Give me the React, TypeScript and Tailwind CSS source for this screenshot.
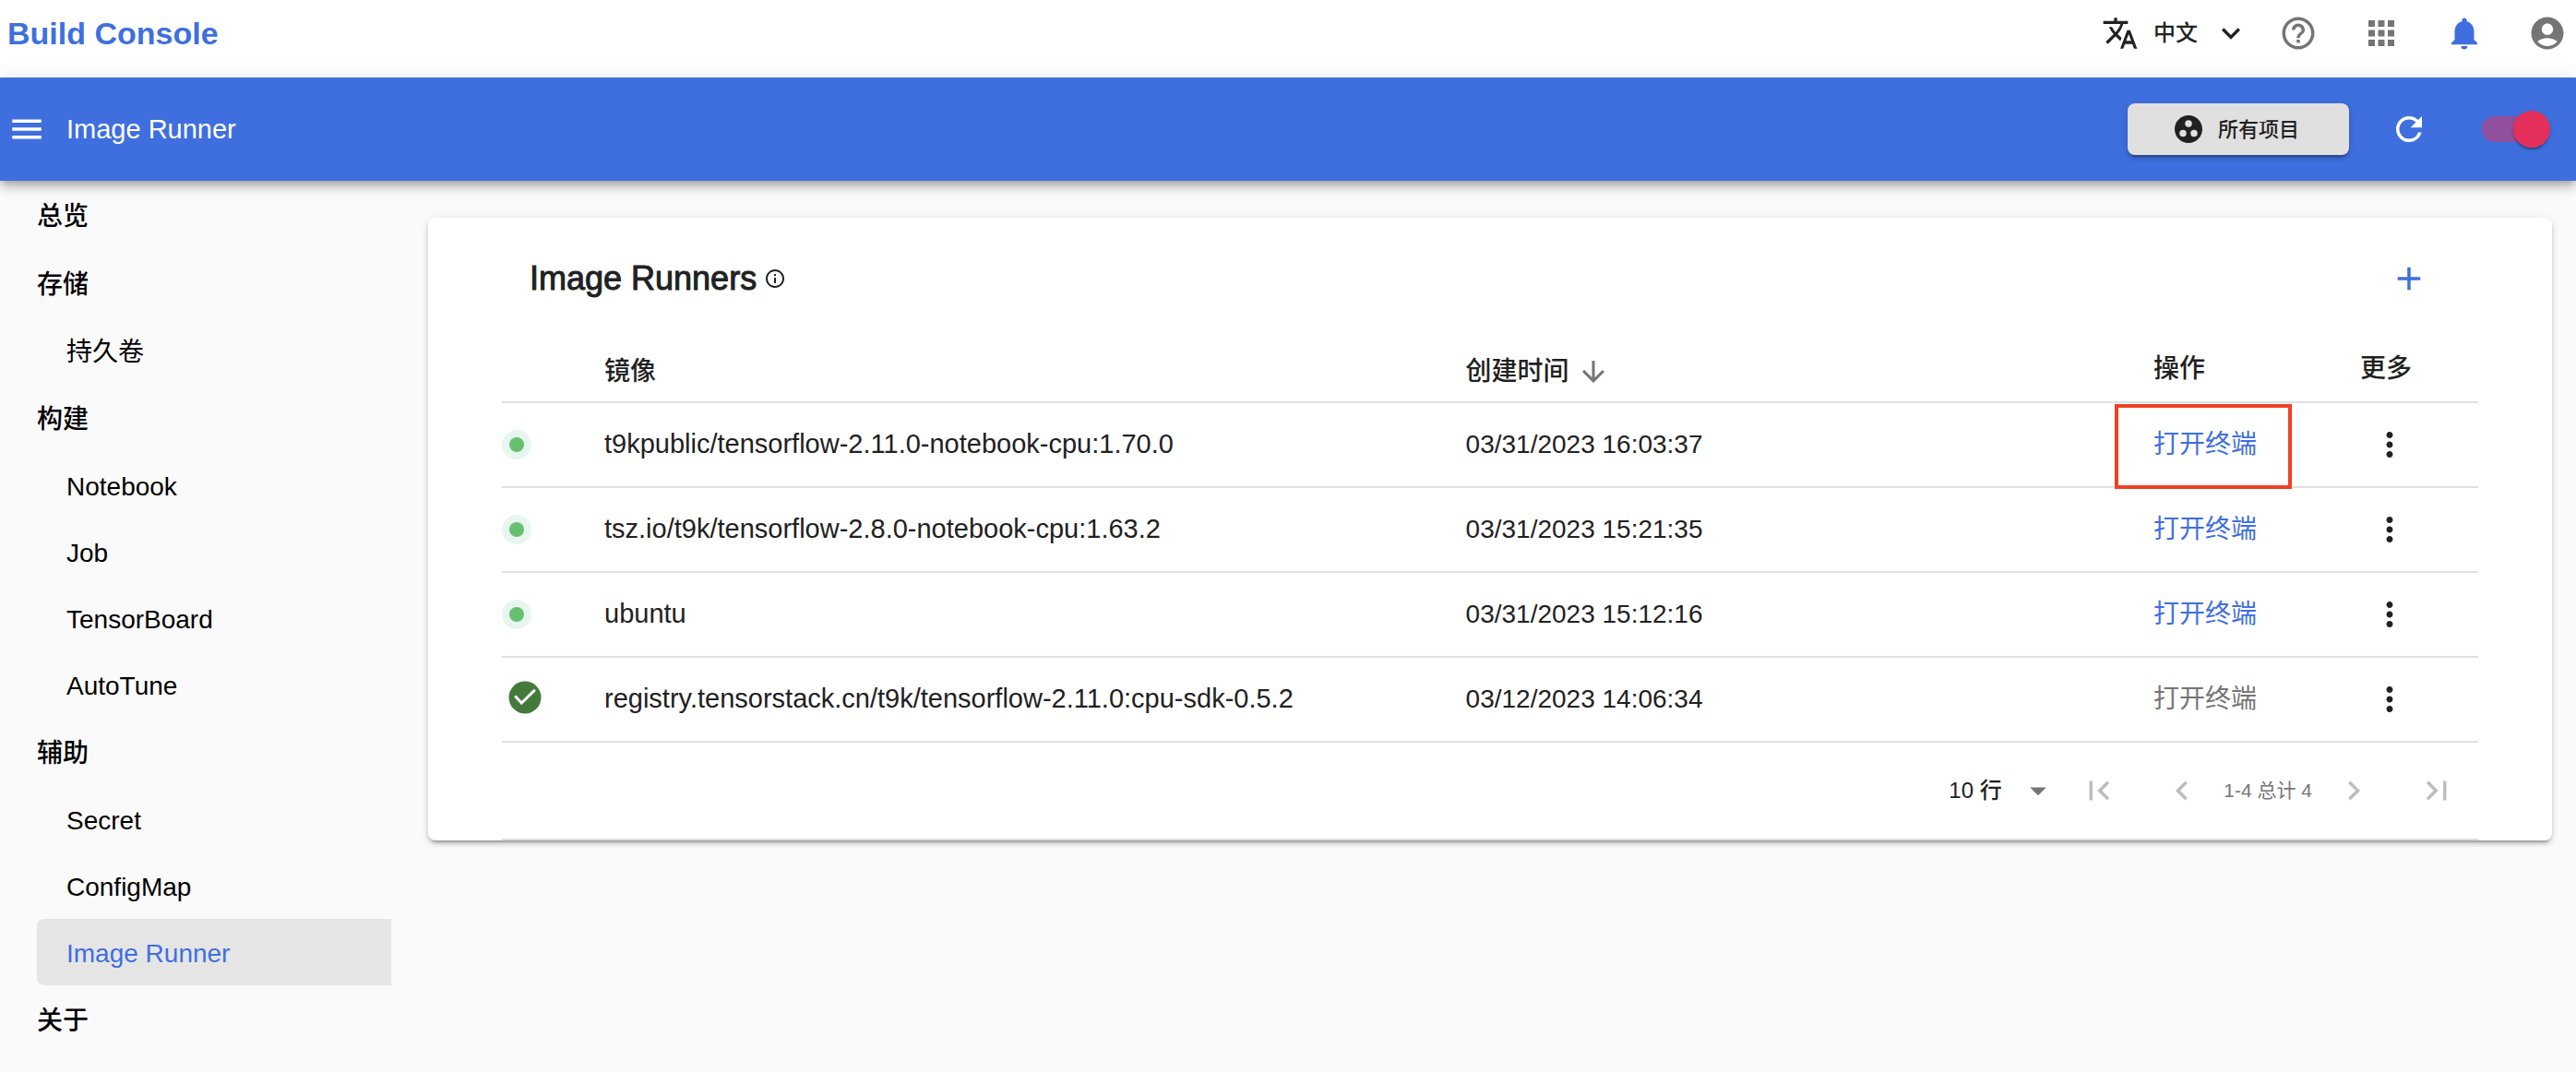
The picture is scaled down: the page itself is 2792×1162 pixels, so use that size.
import React from "react";
import {
  MdAccountCircle,
  MdAdd,
  MdApps,
  MdArrowDownward,
  MdArrowDropDown,
  MdChevronLeft,
  MdChevronRight,
  MdExpandMore,
  MdFirstPage,
  MdGroupWork,
  MdHelpOutline,
  MdInfoOutline,
  MdLastPage,
  MdMenu,
  MdMoreVert,
  MdNotifications,
  MdRefresh,
  MdTranslate,
} from "react-icons/md";

type NavItem = { label: string; group?: boolean; active?: boolean };

const navItems: NavItem[] = [
  { label: "总览", group: true },
  { label: "存储", group: true },
  { label: "持久卷" },
  { label: "构建", group: true },
  { label: "Notebook" },
  { label: "Job" },
  { label: "TensorBoard" },
  { label: "AutoTune" },
  { label: "辅助", group: true },
  { label: "Secret" },
  { label: "ConfigMap" },
  { label: "Image Runner", active: true },
  { label: "关于", group: true },
];

type Runner = {
  image: string;
  created: string;
  status: "running" | "succeeded";
  highlighted?: boolean;
};

const runners: Runner[] = [
  {
    image: "t9kpublic/tensorflow-2.11.0-notebook-cpu:1.70.0",
    created: "03/31/2023 16:03:37",
    status: "running",
    highlighted: true,
  },
  {
    image: "tsz.io/t9k/tensorflow-2.8.0-notebook-cpu:1.63.2",
    created: "03/31/2023 15:21:35",
    status: "running",
  },
  { image: "ubuntu", created: "03/31/2023 15:12:16", status: "running" },
  {
    image: "registry.tensorstack.cn/t9k/tensorflow-2.11.0:cpu-sdk-0.5.2",
    created: "03/12/2023 14:06:34",
    status: "succeeded",
  },
];

function TopBar() {
  return (
    <header className="flex h-[84px] items-center bg-white pr-[10px] pb-3 pl-2">
      <a href="#" className="text-[34px] leading-10 font-bold text-[#3f6fde]">
        Build Console
      </a>
      <div className="ml-auto flex items-center gap-8">
        <button
          type="button"
          aria-haspopup="menu"
          className="flex items-center gap-4 text-2xl font-medium text-[#212121]"
        >
          <MdTranslate size={40} />
          中文
          <MdExpandMore size={40} />
        </button>
        <div className="flex items-center gap-12 text-[#757575]">
          <button type="button" aria-label="帮助">
            <MdHelpOutline size={42} />
          </button>
          <button type="button" aria-label="应用">
            <MdApps size={42} />
          </button>
          <button type="button" aria-label="通知" className="text-[#3f6fde]">
            <MdNotifications size={42} />
          </button>
          <button type="button" aria-label="账户">
            <MdAccountCircle size={42} />
          </button>
        </div>
      </div>
    </header>
  );
}

function AppBar() {
  return (
    <div className="relative z-10 flex h-28 items-center bg-[#3f6fde] pr-[34px] pl-2 text-white shadow-[0_4px_8px_-2px_rgba(0,0,0,0.2),0_8px_10px_0_rgba(0,0,0,0.14),0_2px_20px_0_rgba(0,0,0,0.12)]">
      <button type="button" aria-label="菜单">
        <MdMenu size={42} />
      </button>
      <h1 className="ml-[22px] text-[29px] leading-10 font-medium">Image Runner</h1>
      <button
        type="button"
        className="ml-auto flex h-14 w-[240px] items-center gap-[14px] rounded-lg bg-[#e0e0e0] pl-12 text-[22px] font-medium text-[#212121] shadow-[0_6px_2px_-4px_rgba(0,0,0,0.2),0_4px_4px_0_rgba(0,0,0,0.14),0_2px_10px_0_rgba(0,0,0,0.12)]"
      >
        <MdGroupWork size={36} />
        所有项目
      </button>
      <button type="button" aria-label="刷新" className="ml-11">
        <MdRefresh size={42} />
      </button>
      <input
        type="checkbox"
        role="switch"
        defaultChecked
        aria-label="自动刷新"
        className="relative ml-[58px] h-7 w-[68px] appearance-none rounded-full bg-[#91509d] after:absolute after:-top-1.5 after:left-[34px] after:size-10 after:rounded-full after:bg-[#e4305b] after:shadow-[0_4px_2px_-2px_rgba(0,0,0,0.2),0_2px_2px_0_rgba(0,0,0,0.14),0_2px_6px_0_rgba(0,0,0,0.12)] after:content-['']"
      />
    </div>
  );
}

function Sidebar() {
  return (
    <nav className="flex w-[464px] shrink-0 flex-col px-10 text-[28px] text-black">
      {navItems.map((item) =>
        item.group ? (
          <a key={item.label} href="#" className="flex h-[74px] items-center pt-1 font-medium">
            {item.label}
          </a>
        ) : (
          <a
            key={item.label}
            href="#"
            aria-current={item.active ? "page" : undefined}
            className={
              item.active
                ? "flex h-18 items-center rounded-l-lg bg-[#e5e5e5] pt-1 pl-8 text-[#3f6fde]"
                : "flex h-18 items-center pt-1 pl-8"
            }
          >
            {item.label}
          </a>
        ),
      )}
    </nav>
  );
}

function StatusMark({ status }: { status: Runner["status"] }) {
  if (status === "succeeded") {
    return (
      <svg viewBox="0 0 42 42" className="mb-1 ml-1 size-[42px]" role="img" aria-label="成功">
        <circle cx="21" cy="21" r="17.5" fill="#43793a" />
        <path
          d="M11 20.3l6.3 6.7 13.7-13.3"
          fill="none"
          stroke="#fff"
          strokeWidth="3"
          strokeLinecap="round"
          strokeLinejoin="miter"
        />
      </svg>
    );
  }
  return (
    <span
      role="img"
      aria-label="运行中"
      className="flex size-8 items-center justify-center rounded-full bg-[#e7f7ef]"
    >
      <span className="size-4 rounded-full bg-[#66c070]" />
    </span>
  );
}

function RunnerTable() {
  return (
    <table className="w-full table-fixed border-collapse text-left text-[28px] text-[#212121]">
      <colgroup>
        <col className="w-[111px]" />
        <col />
        <col className="w-[34.8%]" />
        <col className="w-[224px]" />
        <col className="w-[128px]" />
      </colgroup>
      <thead>
        <tr className="h-[68px] border-b-2 border-[#e0e0e0] align-top">
          <th aria-label="状态" />
          <th className="pt-[14px] font-medium">
            <span className="flex h-[42px] items-center">镜像</span>
          </th>
          <th className="pt-[14px] font-medium" aria-sort="descending">
            <button type="button" className="flex h-[42px] items-center gap-2">
              创建时间
              <MdArrowDownward size={36} className="text-[#757575]" />
            </button>
          </th>
          <th className="pt-[14px] font-medium">
            <span className="flex h-9 items-center">操作</span>
          </th>
          <th className="pt-[14px] font-medium">
            <span className="flex h-9 items-center">更多</span>
          </th>
        </tr>
      </thead>
      <tbody>
        {runners.map((runner) => (
          <tr key={runner.image} className="h-[92px] border-b-2 border-[#e0e0e0]">
            <td>
              <StatusMark status={runner.status} />
            </td>
            <td className="truncate text-[29px]">{runner.image}</td>
            <td>{runner.created}</td>
            <td>
              {runner.status === "running" ? (
                <a href="#" className="relative inline-block text-[#3f6fde]">
                  打开终端
                  {runner.highlighted && (
                    <span className="absolute -top-[23px] -left-[42px] h-[92px] w-48 border-4 border-[#f04124]" />
                  )}
                </a>
              ) : (
                <button type="button" disabled className="text-[#757575]">
                  打开终端
                </button>
              )}
            </td>
            <td>
              <button type="button" aria-label="更多" className="ml-[11px] flex">
                <MdMoreVert size={42} />
              </button>
            </td>
          </tr>
        ))}
      </tbody>
    </table>
  );
}

function Pagination() {
  return (
    <div className="flex h-[106px] items-center justify-end border-b-2 border-[#e0e0e0] text-[#bdbdbd]">
      <div className="relative flex items-center">
        <select
          aria-label="每页行数"
          className="h-12 w-[118px] appearance-none bg-transparent text-2xl font-medium text-[#212121]"
        >
          <option>10 行</option>
        </select>
        <MdArrowDropDown
          size={42}
          className="pointer-events-none absolute right-0 text-[#757575]"
        />
      </div>
      <button type="button" disabled aria-label="第一页" className="px-6">
        <MdFirstPage size={42} />
      </button>
      <button type="button" disabled aria-label="上一页" className="px-6">
        <MdChevronLeft size={42} />
      </button>
      <span className="text-[21px] text-[#757575]">1-4 总计 4</span>
      <button type="button" disabled aria-label="下一页" className="px-6">
        <MdChevronRight size={42} />
      </button>
      <button type="button" disabled aria-label="最后一页" className="px-6">
        <MdLastPage size={42} />
      </button>
    </div>
  );
}

export default function App() {
  return (
    <div
      lang="zh-CN"
      className="min-h-screen bg-[#fafafa] font-['Liberation_Sans','Noto_Sans_CJK_SC',sans-serif]"
    >
      <TopBar />
      <AppBar />
      <div className="flex">
        <Sidebar />
        <main className="min-w-0 flex-1 pt-10 pr-[26px]">
          <section className="rounded-lg bg-white px-20 shadow-[0_6px_2px_-4px_rgba(0,0,0,0.2),0_4px_4px_0_rgba(0,0,0,0.14),0_2px_10px_0_rgba(0,0,0,0.12)]">
            <div className="flex h-[132px] items-center pr-[54px] pl-[30px]">
              <h2 className="text-4xl font-medium text-[#212121] [-webkit-text-stroke:1px_#212121]">
                Image Runners
              </h2>
              <MdInfoOutline size={24} className="ml-2 text-[#212121]" />
              <button type="button" aria-label="新建" className="ml-auto text-[#3f6fde]">
                <MdAdd size={42} />
              </button>
            </div>
            <RunnerTable />
            <Pagination />
          </section>
        </main>
      </div>
    </div>
  );
}
